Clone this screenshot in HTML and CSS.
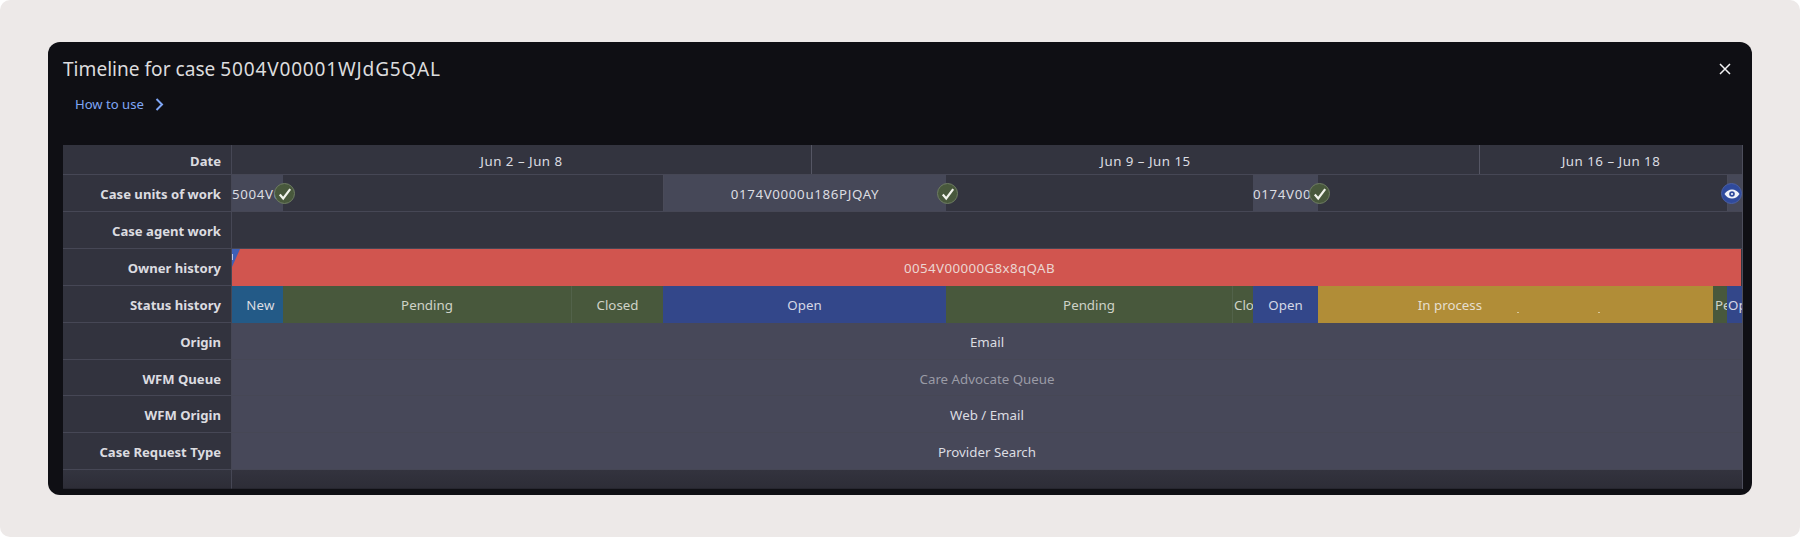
FILE: index.html
```html
<!DOCTYPE html>
<html lang="en">
<head>
<meta charset="utf-8">
<title>Timeline for case 5004V00001WJdG5QAL</title>
<link rel="stylesheet" href="styles.css">
</head>
<body>
<main class="page">
  <section class="modal">
    <header class="modal-head">
      <h1 class="title">Timeline for case <span class="title-id">5004V00001WJdG5QAL</span></h1>
      <button class="close" aria-label="Close">
        <svg width="12" height="12" viewBox="0 0 12 12"><path d="M1 1l10 10M11 1L1 11" stroke="#f2f2f4" stroke-width="1.5" fill="none"/></svg>
      </button>
    </header>
    <a class="howto">How to use
      <svg class="chev" width="9" height="13" viewBox="0 0 9 13"><path d="M1.5 1l5.5 5.5L1.5 12" stroke="#7fa6f5" stroke-width="2" fill="none"/></svg>
    </a>
    <div class="timeline">
      <div class="row row-date">
        <div class="label">Date</div>
        <div class="track">
          <div class="seg seg-date" style="width:580px">Jun 2 – Jun 8</div>
          <div class="seg seg-date" style="width:668px">Jun 9 – Jun 15</div>
          <div class="seg seg-date last" style="width:262px">Jun 16 – Jun 18</div>
        </div>
      </div>
      <div class="row">
        <div class="label">Case units of work</div>
        <div class="track">
          <div class="unit left" style="width:51px"><span class="unit-text">5004V00001WJdG5QAL</span>
            <span class="badge ok"><svg width="14" height="14" viewBox="0 0 14 14"><path d="M1.800 7.500L5.200 11.500L12.200 2.200" stroke="#f1f3ec" stroke-width="2.200" fill="none"/></svg></span>
          </div>
          <div class="gap" style="width:380px"></div>
          <div class="unit" style="width:283px"><span class="unit-text">0174V0000u186PJQAY</span>
            <span class="badge ok"><svg width="14" height="14" viewBox="0 0 14 14"><path d="M1.800 7.500L5.200 11.500L12.200 2.200" stroke="#f1f3ec" stroke-width="2.200" fill="none"/></svg></span>
          </div>
          <div class="gap" style="width:307px"></div>
          <div class="unit left" style="width:65px"><span class="unit-text">0174V0000u186PJQAY</span>
            <span class="badge ok"><svg width="14" height="14" viewBox="0 0 14 14"><path d="M1.800 7.500L5.200 11.500L12.200 2.200" stroke="#f1f3ec" stroke-width="2.200" fill="none"/></svg></span>
          </div>
          <div class="gap" style="width:409px"></div>
          <div class="unit" style="width:15px">
            <span class="badge view"><svg width="16" height="10" viewBox="0 0 16 10"><path d="M0.5 5C2.5 2 5 .5 8 .5S13.500 2 15.500 5C13.500 8 11 9.500 8 9.500S2.500 8 .5 5z" fill="#f1f3fa"/><circle cx="8" cy="5" r="2.800" fill="#2f4a9c"/><circle cx="8" cy="5" r="1.100" fill="#f1f3fa"/></svg></span>
          </div>
        </div>
      </div>
      <div class="row">
        <div class="label">Case agent work</div>
        <div class="track"></div>
      </div>
      <div class="row row-solid">
        <div class="label">Owner history</div>
        <div class="track">
          <div class="seg owner" style="width:1509px">0054V00000G8x8qQAB<span class="corner"></span></div>
        </div>
      </div>
      <div class="row row-solid">
        <div class="label">Status history</div>
        <div class="track">
          <div class="seg new" style="width:51px">New</div>
          <div class="seg pending" style="width:288px">Pending</div>
          <div class="seg pending split" style="width:92px">Closed</div>
          <div class="seg open" style="width:283px">Open</div>
          <div class="seg pending" style="width:286px">Pending</div>
          <div class="seg pending split left tight" style="width:21px">Closed</div>
          <div class="seg open" style="width:65px">Open</div>
          <div class="seg gold" style="width:264px">In process<span class="speck"></span></div>
          <div class="seg gold" style="width:131px"><span class="speck speck-second"></span></div>
          <div class="seg pending left" style="width:14px">Pending</div>
          <div class="seg open left tight" style="width:15px">Open</div>
        </div>
      </div>
      <div class="row">
        <div class="label">Origin</div>
        <div class="track"><div class="seg plain" style="width:1510px">Email</div></div>
      </div>
      <div class="row">
        <div class="label">WFM Queue</div>
        <div class="track"><div class="seg plain dim" style="width:1510px">Care Advocate Queue</div></div>
      </div>
      <div class="row">
        <div class="label">WFM Origin</div>
        <div class="track"><div class="seg plain" style="width:1510px">Web / Email</div></div>
      </div>
      <div class="row">
        <div class="label">Case Request Type</div>
        <div class="track"><div class="seg plain" style="width:1510px">Provider Search</div></div>
      </div>
      <div class="row row-end">
        <div class="label"></div>
        <div class="track"></div>
      </div>
    </div>
  </section>
</main>
</body>
</html>
```

FILE: styles.css
```css
* { box-sizing: border-box; }
html, body { margin: 0; height: 100%; background: #fff; }
body { font-family: "Noto Sans", "Liberation Sans", sans-serif; overflow: hidden; }

.page {
  height: 537px;
  padding: 42px 48px;
  background: #ede9e8;
  border-radius: 10px;
}

.modal {
  display: flex;
  flex-direction: column;
  height: 453px;
  padding: 13px 9px 6px 15px;
  background: #0f0f14;
  border-radius: 12px;
}

.modal-head {
  display: flex;
  align-items: center;
  justify-content: space-between;
  height: 28px;
}
.title {
  margin: 0;
  font-size: 19.1px;
  line-height: 28px;
  font-weight: 400;
  color: #dcdcde;
}
.title-id { letter-spacing: 0.8px; }
.close {
  display: flex;
  margin: 0 12px 0 0;
  padding: 0;
  border: 0;
  background: none;
}

.howto {
  display: flex;
  align-items: center;
  gap: 11px;
  height: 20px;
  margin: 11px 0 31px 12px;
  font-size: 13.1px;
  color: #7fa6f5;
}

.timeline {
  display: flex;
  flex-direction: column;
  flex: 1;
  border-right: 1px solid #4d4e5c;
}

.row {
  display: flex;
  height: 37px;
}
.row-date { height: 30px; }
.row-end { flex: 1; height: auto; }
.row:nth-child(7) { height: 36px; }

.label {
  flex: none;
  width: 169px;
  padding-right: 10px;
  border-right: 1px solid #464755;
  border-bottom: 1px solid #464755;
  background: #32333e;
  font-size: 13.1px;
  font-weight: 700;
  line-height: 39px;
  text-align: right;
  color: #dcdce0;
}
.row-date .label { line-height: 32px; }
.row-end .label {
  background: linear-gradient(#33343f, #2d2d37);
  border-bottom-color: #26262f;
}

.track {
  display: flex;
  flex: 1;
  min-width: 0;
  background: #33343f;
  border-bottom: 1px solid #464755;
}
.row-solid .track { border-bottom: 0; }
.row-end .track {
  background: linear-gradient(#33333e, #2d2d37);
  border-bottom-color: #26262f;
}

.seg {
  position: relative;
  flex: none;
  font-size: 13.3px;
  line-height: 39px;
  text-align: center;
  white-space: nowrap;
  color: #dcdde2;
  overflow: hidden;
}
.seg.left { padding-left: 2px; text-align: left; }
.seg.tight { padding-left: 1px; }

.seg-date {
  border-right: 1px solid #555664;
  line-height: 32px;
  letter-spacing: 0.5px;
}
.seg-date.last { border-right: 0; }

.unit {
  position: relative;
  flex: none;
  border-left: 1px solid #4a4b59;
  background: #464858;
  font-size: 13.3px;
  line-height: 39px;
  text-align: center;
  color: #dcdde2;
}
.unit.left { text-align: left; border-left: 0; }
.unit-text {
  display: block;
  overflow: hidden;
  white-space: nowrap;
  letter-spacing: 0.65px;
}
.gap { flex: none; }

.badge {
  position: absolute;
  top: 8px;
  right: -12px;
  z-index: 1;
  display: flex;
  align-items: center;
  justify-content: center;
  width: 21px;
  height: 21px;
  border-radius: 50%;
}
.badge.ok { background: #48583c; border: 1px solid #6e7d62; }
.badge.view { right: 0; background: #2f4a9c; border: 1px solid #4a5fa5; }

.owner {
  padding-right: 14px;
  background: #d1554f;
  color: #ecd5d2;
  letter-spacing: 0.4px;
}
.corner {
  position: absolute;
  top: 0;
  left: 0;
  width: 8px;
  height: 18px;
  background: #3f5fb5;
  clip-path: polygon(0 0, 100% 0, 0 100%);
}
.corner::after {
  content: "";
  position: absolute;
  top: 5px;
  left: 0;
  width: 1px;
  height: 6px;
  background: #b9c6ea;
}
.new { padding-left: 6px; background: #235a87; letter-spacing: 0.3px; }
.pending { background: #48583c; color: #cfd3c8; }
.split { border-left: 1px solid #52624a; }
.open { background: #33478a; color: #d5d8e6; }
.gold { background: #b18d37; color: #e6dfcf; }
.speck {
  position: absolute;
  top: 26px;
  left: 199px;
  width: 2px;
  height: 1px;
  background: #d6c79c;
}
.speck-second { left: 16px; }
.plain { background: #474859; }
.dim { color: #9a9ba6; }
```
